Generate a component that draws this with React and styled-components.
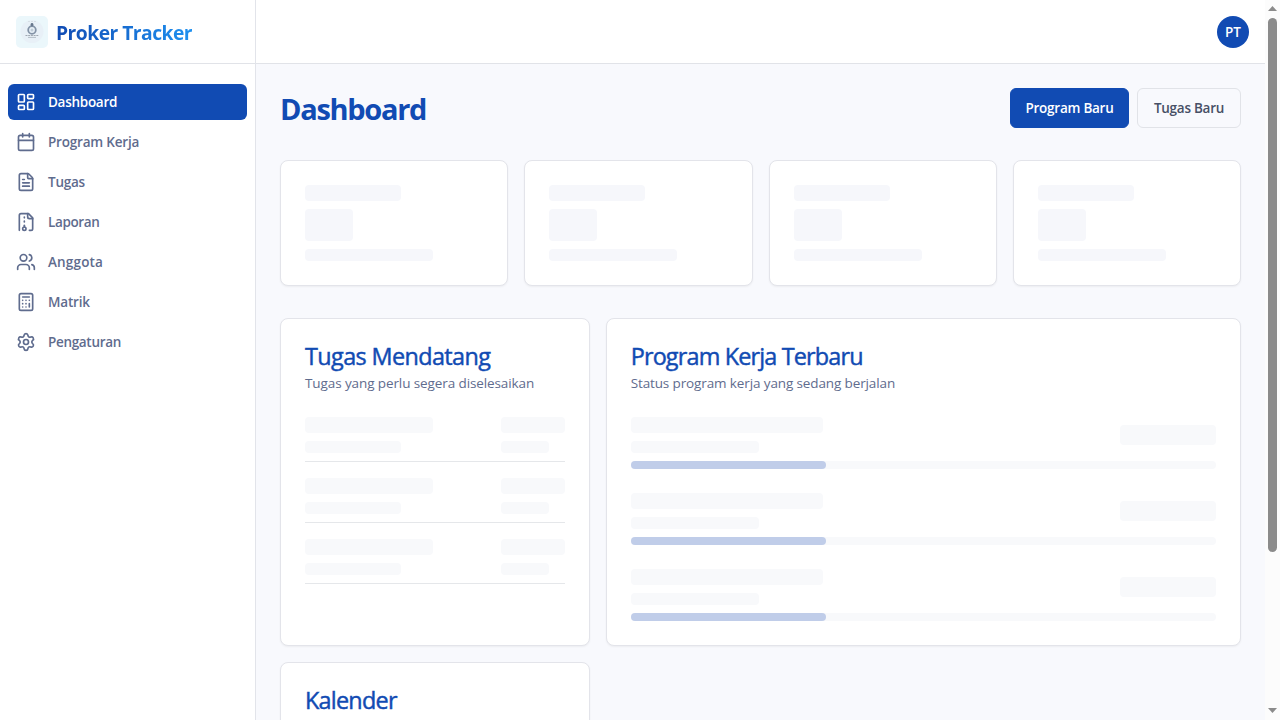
import React from "react";
import styled, { createGlobalStyle } from "styled-components";
import { LayoutDashboard, Calendar, FileText, Users, Calculator, Settings } from "lucide-react";

const GlobalStyle = createGlobalStyle`
  *, *::before, *::after { box-sizing: border-box; }
  body { margin: 0; overflow: hidden; background: #f8f9fd; font-family: "Segoe UI", "Open Sans", "Noto Sans", sans-serif; }
  h1, h2, p { margin: 0; }
`;

const Screen = styled.div`
  display: flex;
  width: 100%;
  height: 100vh;
  overflow: hidden;
`;

const Sidebar = styled.aside`
  flex: none;
  width: 256px;
  background: #fff;
  border-right: 1px solid #e2e4ea;
`;

const Brand = styled.div`
  display: flex;
  align-items: center;
  gap: 8px;
  height: 64px;
  padding: 0 16px;
  border-bottom: 1px solid #e1e3e8;
`;

const BrandName = styled.span`
  font-size: 19.3px;
  line-height: 28px;
  font-weight: 700;
  letter-spacing: -0.53px;
  white-space: nowrap;
  padding-top: 2px;
  background: linear-gradient(to right, #114bb3, #1e90f0);
  background-clip: text;
  -webkit-background-clip: text;
  color: transparent;
`;

const Nav = styled.nav`
  display: flex;
  flex-direction: column;
  gap: 4px;
  padding: 20px 8px;
`;

const NavItem = styled.a`
  display: flex;
  align-items: center;
  gap: 12px;
  height: 36px;
  padding: 0 8px;
  border-radius: 6px;
  font-size: 13.5px;
  line-height: 20px;
  font-weight: 600;
  letter-spacing: ${(p) => p.$track || 0}px;
  white-space: nowrap;
  background: ${(p) => (p.$active ? "#114bb3" : "transparent")};
  color: ${(p) => (p.$active ? "#fff" : "#5f6c8e")};
  svg { flex: none; }
`;

const Content = styled.div`
  flex: 1;
  min-width: 0;
`;

const TopBar = styled.header`
  display: flex;
  align-items: center;
  justify-content: flex-end;
  height: 64px;
  padding: 0 16px;
  background: #fff;
  border-bottom: 1px solid #e1e3e8;
`;

const Avatar = styled.div`
  display: grid;
  place-items: center;
  width: 32px;
  height: 32px;
  border-radius: 50%;
  background: #114bb3;
  color: #fff;
  font-size: 13.5px;
  font-weight: 600;
`;

const Main = styled.main`
  display: flex;
  flex-direction: column;
  gap: 32px;
  padding: 24px;
`;

const PageHead = styled.div`
  display: flex;
  align-items: center;
  justify-content: space-between;
  height: 40px;
`;

const PageTitle = styled.h1`
  font-size: 29px;
  line-height: 36px;
  font-weight: 700;
  letter-spacing: -1.3px;
  color: #114bb3;
  padding-top: 1px;
`;

const Actions = styled.div`
  display: flex;
  gap: 8px;
`;

const Button = styled.button`
  width: ${(p) => p.$width}px;
  height: 40px;
  padding: 0;
  border-radius: 6px;
  border: 1px solid ${(p) => (p.$primary ? "#114bb3" : "#e1e3e8")};
  background: ${(p) => (p.$primary ? "#114bb3" : "#f8f9fd")};
  color: ${(p) => (p.$primary ? "#fff" : "#475066")};
  font: 600 13.5px/20px "Segoe UI", "Open Sans", "Noto Sans", sans-serif;
  letter-spacing: -0.25px;
  white-space: nowrap;
`;

const Stats = styled.div`
  display: grid;
  grid-template-columns: repeat(4, 1fr);
  gap: 16px;
`;

const Card = styled.section`
  grid-column: span ${(p) => p.$span || 1};
  min-width: 0;
  padding: 24px;
  background: #fff;
  border: 1px solid #e3e4ea;
  border-radius: 8px;
  box-shadow: 0 1px 2px rgba(0, 0, 0, 0.05);
`;

const StatCard = styled(Card)`
  display: flex;
  flex-direction: column;
  gap: 8px;
  height: 126px;
`;

const Bone = styled.div`
  width: ${(p) => p.$w}px;
  height: ${(p) => p.$h}px;
  border-radius: 4px;
  background: ${(p) => p.$tone || "#f8f9fb"};
`;

const Panels = styled.div`
  display: grid;
  grid-template-columns: repeat(3, 1fr);
  grid-template-rows: 328px 328px;
  gap: 16px;
`;

const CardTitle = styled.h2`
  height: 26px;
  font-size: 23.4px;
  line-height: 26px;
  font-weight: 400;
  -webkit-text-stroke: 0.45px #114bb3;
  letter-spacing: ${(p) => p.$track}px;
  color: #114bb3;
  white-space: nowrap;
`;

const CardNote = styled.p`
  margin-top: 4px;
  font-size: 13.5px;
  line-height: 20px;
  letter-spacing: ${(p) => p.$track}px;
  color: #5f6c8e;
  white-space: nowrap;
`;

const Rows = styled.div`
  display: flex;
  flex-direction: column;
  gap: ${(p) => p.$gap}px;
  margin-top: 24px;
`;

const TaskRow = styled.div`
  display: flex;
  justify-content: space-between;
  padding-bottom: 8px;
  border-bottom: 1px solid #e5e7ea;
`;

const Stack = styled.div`
  display: flex;
  flex-direction: column;
  gap: 8px;
`;

const ProgramHead = styled.div`
  display: flex;
  align-items: center;
  justify-content: space-between;
`;

const Track = styled.div`
  height: 8px;
  border-radius: 4px;
  background: #f8f9fb;
`;

const Fill = styled.div`
  width: 33.333%;
  height: 100%;
  border-radius: 4px;
  background: #c0cde9;
`;

const ScrollBar = styled.div`
  flex: none;
  display: flex;
  flex-direction: column;
  align-items: center;
  justify-content: space-between;
  width: 15px;
  padding: 6px 0 7px;
  background: #fcfcfc;
`;

const Thumb = styled.div`
  width: 9px;
  height: 534px;
  margin: 7px 0 auto;
  border-radius: 5px;
  background: #8b8b8b;
`;

const Logo = () => (
  <svg width="32" height="32" viewBox="0 0 32 32" fill="none">
    <rect width="32" height="32" rx="5" fill="#ebf7fb" />
    <circle cx="16" cy="15.5" r="11.5" fill="#e8f0f7" />
    <path d="M12 5.5h8" stroke="#d7dfe5" strokeDasharray="2 1" />
    <circle cx="16" cy="14" r="3.8" stroke="#8392a6" strokeWidth="1.8" />
    <circle cx="16" cy="14" r="1.5" fill="#c0ccd8" />
    <path d="M16 7v3.2M14.6 8.6h2.8" stroke="#66768c" strokeWidth="1.7" />
    <path d="M9.5 19.5h13" stroke="#a0a8b2" strokeDasharray="2 .7" />
    <path d="M12 21.4h8" stroke="#b4bdc6" />
  </svg>
);

const ZipFile = ({ size }) => (
  <svg width={size} height={size} viewBox="0 0 24 24" fill="none" stroke="currentColor" strokeWidth="2" strokeLinecap="round" strokeLinejoin="round">
    <path d="M16 22h2a2 2 0 0 0 2-2V7l-5-5H6a2 2 0 0 0-2 2v18" />
    <path d="M14 2v4a2 2 0 0 0 2 2h4" />
    <circle cx="10" cy="20" r="2" />
    <path d="M10 7V6" />
    <path d="M10 12v-1" />
    <path d="M10 18v-2" />
  </svg>
);

const Arrow = ({ down }) => (
  <svg width="9" height="5" viewBox="0 0 9 5">
    <path d={down ? "M0 0h9L4.5 5z" : "M0 5h9L4.5 0z"} fill="#8b8b8b" />
  </svg>
);

const links = [
  { label: "Dashboard", Icon: LayoutDashboard, track: -0.28 },
  { label: "Program Kerja", Icon: Calendar, track: -0.2 },
  { label: "Tugas", Icon: FileText, track: -0.25 },
  { label: "Laporan", Icon: ZipFile, track: -0.38 },
  { label: "Anggota", Icon: Users, track: 0.18 },
  { label: "Matrik", Icon: Calculator, track: -0.17 },
  { label: "Pengaturan", Icon: Settings, track: -0.32 },
];

export default function App() {
  return (
    <Screen>
      <GlobalStyle />
      <Sidebar>
        <Brand>
          <Logo />
          <BrandName>Proker Tracker</BrandName>
        </Brand>
        <Nav>
          {links.map(({ label, Icon, track }, i) => (
            <NavItem key={label} $active={i === 0} $track={track}>
              <Icon size={20} />
              <span>{label}</span>
            </NavItem>
          ))}
        </Nav>
      </Sidebar>
      <Content>
        <TopBar>
          <Avatar>PT</Avatar>
        </TopBar>
        <Main>
          <PageHead>
            <PageTitle>Dashboard</PageTitle>
            <Actions>
              <Button $primary $width={119}>Program Baru</Button>
              <Button $width={104}>Tugas Baru</Button>
            </Actions>
          </PageHead>
          <Stats>
            {[0, 1, 2, 3].map((n) => (
              <StatCard key={n}>
                <Bone $w={96} $h={16} $tone="#f6f7fb" />
                <Bone $w={48} $h={32} $tone="#f6f7fb" />
                <Bone $w={128} $h={12} $tone="#f6f7fb" />
              </StatCard>
            ))}
          </Stats>
          <Panels>
            <Card>
              <CardTitle $track={-0.6}>Tugas Mendatang</CardTitle>
              <CardNote $track={-0.1}>Tugas yang perlu segera diselesaikan</CardNote>
              <Rows $gap={16}>
                {[0, 1, 2].map((n) => (
                  <TaskRow key={n}>
                    <Stack>
                      <Bone $w={128} $h={16} />
                      <Bone $w={96} $h={12} />
                    </Stack>
                    <Stack>
                      <Bone $w={64} $h={16} />
                      <Bone $w={48} $h={12} />
                    </Stack>
                  </TaskRow>
                ))}
              </Rows>
            </Card>
            <Card $span={2}>
              <CardTitle $track={-0.83}>Program Kerja Terbaru</CardTitle>
              <CardNote $track={-0.12}>Status program kerja yang sedang berjalan</CardNote>
              <Rows $gap={24}>
                {[0, 1, 2].map((n) => (
                  <Stack key={n}>
                    <ProgramHead>
                      <Stack>
                        <Bone $w={192} $h={16} />
                        <Bone $w={128} $h={12} />
                      </Stack>
                      <Bone $w={96} $h={20} />
                    </ProgramHead>
                    <Track>
                      <Fill />
                    </Track>
                  </Stack>
                ))}
              </Rows>
            </Card>
            <Card>
              <CardTitle $track={-0.75}>Kalender</CardTitle>
            </Card>
          </Panels>
        </Main>
      </Content>
      <ScrollBar>
        <Arrow />
        <Thumb />
        <Arrow down />
      </ScrollBar>
    </Screen>
  );
}
